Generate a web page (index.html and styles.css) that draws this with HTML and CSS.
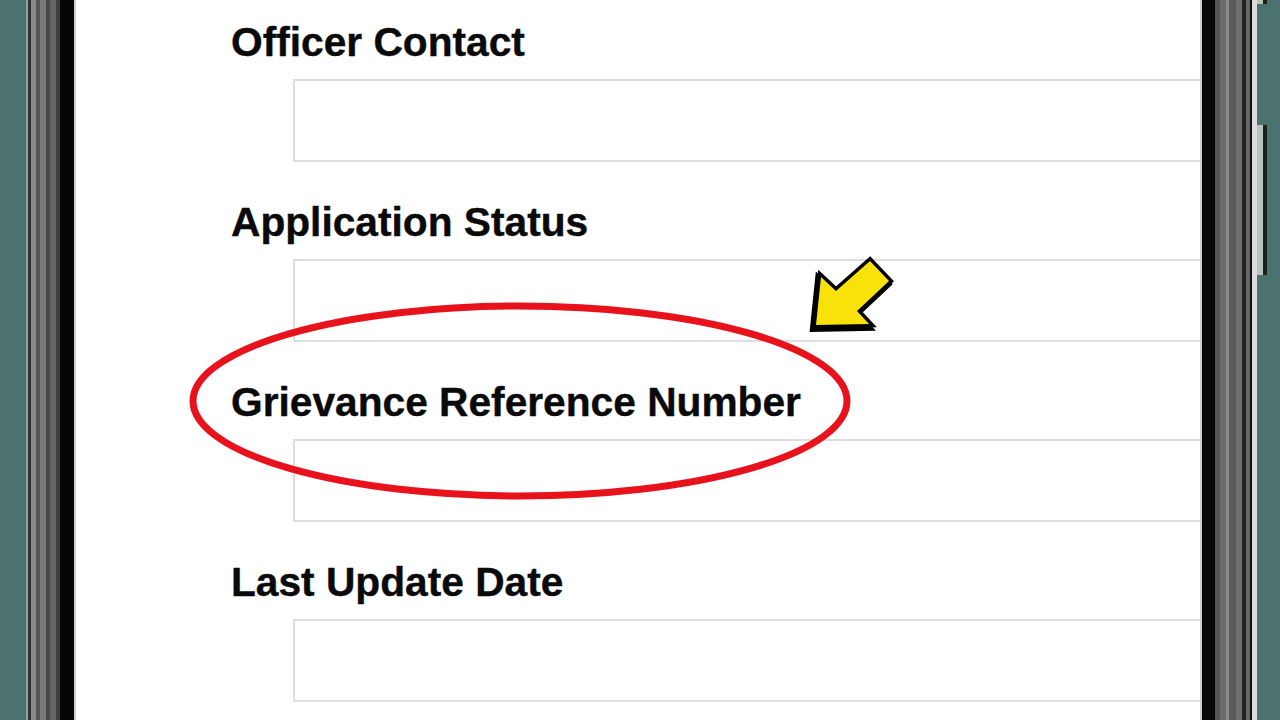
FILE: index.html
```html
<!DOCTYPE html>
<html>
  <head>
    <meta charset="UTF-8">
    <title>Grievance Status</title>
    <link rel="stylesheet" href="styles.css">
  </head>
  <body>
    <div class="phone">
      <div class="backdrop"></div>
      <div class="bezel bezel-left"></div>

      <!-- Form Section -->
      <div class="screen">
        <div class="field">
          <label class="field-label">Officer Contact</label>
          <div class="field-box"></div>
        </div>
        <div class="field">
          <label class="field-label">Application Status</label>
          <div class="field-box"></div>
        </div>
        <div class="field">
          <label class="field-label">Grievance Reference Number</label>
          <div class="field-box"></div>
        </div>
        <div class="field">
          <label class="field-label">Last Update Date</label>
          <div class="field-box"></div>
        </div>
      </div>

      <div class="bezel bezel-right"></div>
      <div class="backdrop backdrop-right">
        <div class="side-key side-key-top"></div>
        <div class="side-key side-key-mid"></div>
      </div>
    </div>

    <!-- highlight marks on top -->
    <svg class="marks" width="1280" height="720" viewBox="0 0 1280 720">
      <ellipse cx="520" cy="401" rx="327" ry="95" fill="none" stroke="#e8121c" stroke-width="7"/>
      <g stroke-linejoin="miter">
        <polygon points="816,325 821,277 836,291 870,261 889,281 857,311 869,324" fill="#000" stroke="#000" stroke-width="8" transform="translate(-2 3)"/>
        <polygon points="816,325 821,277 836,291 870,261 889,281 857,311 869,324" fill="#000" stroke="#000" stroke-width="7"/>
        <polygon points="816,325 821,277 836,291 870,261 889,281 857,311 869,324" fill="#f9e20a"/>
      </g>
    </svg>
  </body>
</html>
```

FILE: styles.css
```css
body {
  margin: 0;
  padding: 0;
  width: 1280px;
  height: 720px;
  overflow: hidden;
  position: relative;
  font-family: "Liberation Sans", Arial, sans-serif;
  background-color: #4b726f;
}
.phone {
  display: flex;
  height: 720px;
}
.backdrop {
  width: 26px;
  background-color: #4b726f;
}
.backdrop-right {
  width: 23px;
  position: relative;
}
.bezel-left {
  width: 50px;
  background: linear-gradient(to right,
    #8fa3a0 0, #8fa3a0 2px,
    #333 2px, #333 5px,
    #8a8a8a 5px, #8a8a8a 10px,
    #555 10px, #555 14px,
    #7a7a7a 14px, #7a7a7a 20px,
    #4a4a4a 20px, #4a4a4a 24px,
    #666 24px, #666 30px,
    #3e3e3e 30px, #3e3e3e 34px,
    #050505 34px, #050505 48px,
    #cfcfcf 48px, #cfcfcf 50px);
}
.bezel-right {
  width: 57px;
  background: linear-gradient(to right,
    #cfcfcf 0, #cfcfcf 2px,
    #080808 2px, #080808 15px,
    #555 15px, #555 20px,
    #6a6a6a 20px, #6a6a6a 26px,
    #8a8a8a 26px, #8a8a8a 29px,
    #5a5a5a 29px, #5a5a5a 36px,
    #707070 36px, #707070 42px,
    #222 42px, #222 46px,
    #666 46px, #666 50px,
    #111 50px, #111 52px,
    #dcdcdc 52px, #dcdcdc 57px);
}
.side-key {
  position: absolute;
  left: 0;
  width: 6px;
  background-color: #b9c2c0;
  border-right: 4px solid #1a1f1e;
}
.side-key-top {
  top: -10px;
  height: 14px;
}
.side-key-mid {
  top: 125px;
  height: 150px;
}
.screen {
  flex: 1;
  background-color: #fff;
  padding: 19px 0 0 155px;
  overflow: hidden;
}
.field {
  display: flex;
  flex-direction: column;
}
.field-label {
  font-size: 40.7px;
  font-weight: bold;
  line-height: 46px;
  color: #0a0a0a;
  white-space: nowrap;
  -webkit-text-stroke: 0.4px #0a0a0a;
}
.field-box {
  height: 79px;
  margin: 14px 0 37px 62px;
  border: 2px solid #dedede;
  border-right: none;
}
.marks {
  position: absolute;
  left: 0;
  top: 0;
}
```
